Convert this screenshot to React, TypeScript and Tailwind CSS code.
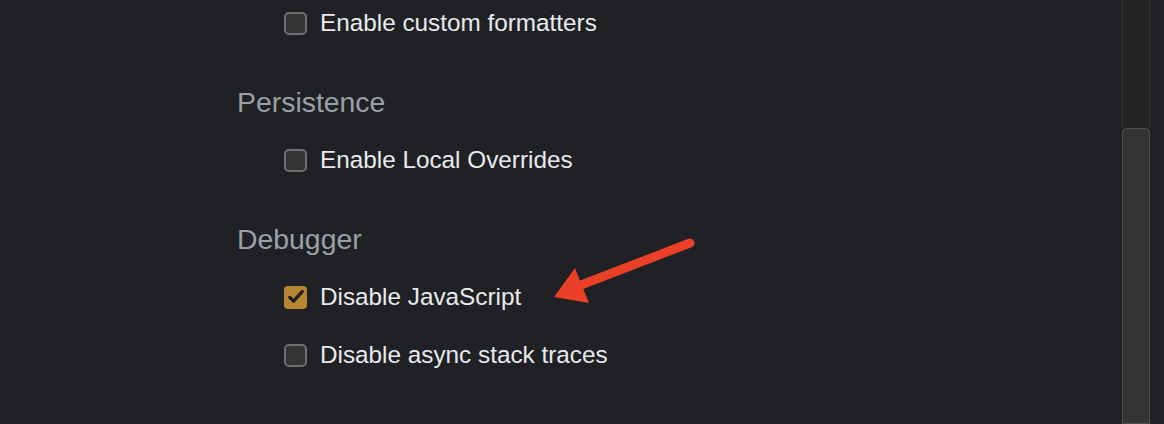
import React from 'react'

type Item = { label: string; checked?: boolean }
type Section = { title: string; items: Item[] }

const sections: Section[] = [
  { title: 'Persistence', items: [{ label: 'Enable Local Overrides' }] },
  {
    title: 'Debugger',
    items: [{ label: 'Disable JavaScript', checked: true }, { label: 'Disable async stack traces' }],
  },
  { title: 'Global', items: [] },
]

function Checkbox({ checked }: { checked?: boolean }) {
  if (checked) {
    return (
      <div className="w-[23px] h-[23px] rounded-[4px] bg-[#b5862f] flex items-center justify-center shrink-0">
        <svg width="20" height="20" viewBox="0 0 24 24" fill="none">
          <path d="M4.5 12.5l4.5 4.5L19.5 5.5" stroke="#202124" strokeWidth="4" strokeLinecap="round" strokeLinejoin="round" />
        </svg>
      </div>
    )
  }
  return <div className="w-[23px] h-[23px] rounded-[5px] bg-[#333333] border-2 border-[#6e6e6e] shrink-0" />
}

function Row({ item }: { item: Item }) {
  return (
    <div className="h-[58px] flex items-center gap-[13px] pl-[47px]">
      <Checkbox checked={item.checked} />
      <span className="text-[24.3px] text-[#e8eaed] leading-none">{item.label}</span>
    </div>
  )
}

export default function App() {
  return (
    <div
      className="relative w-[1164px] h-[424px] overflow-hidden bg-[#202124] flex"
      style={{ fontFamily: '"Liberation Sans", Arial, sans-serif' }}
    >
      <div className="flex-1 pl-[237px]">
        <div className="-mt-[6px]">
          <Row item={{ label: 'Enable custom formatters' }} />
          {sections.map((s) => (
            <div key={s.title} className="mt-[21px]">
              <div className="h-[58px] flex items-center">
                <span className="text-[28.4px] text-[#9aa0a6] leading-none">{s.title}</span>
              </div>
              {s.items.map((it) => (
                <Row key={it.label} item={it} />
              ))}
            </div>
          ))}
        </div>
      </div>

      {/* scrollbar */}
      <div className="w-[28px] mr-[14px] flex flex-col shrink-0">
        <div className="h-[128px] bg-[#242424] border-x border-[#363636]" />
        <div className="flex-1 bg-[#333333] border border-[#4f4f4f] rounded-t-[4px]" />
      </div>

      {/* annotation arrow */}
      <svg className="absolute inset-0 pointer-events-none" width="1164" height="424">
        <path d="M581 285 L690 243" stroke="#ea4027" strokeWidth="9" strokeLinecap="round" />
        <polygon points="554,297 575,268 580,281 589,303" fill="#ea4027" />
      </svg>
    </div>
  )
}
